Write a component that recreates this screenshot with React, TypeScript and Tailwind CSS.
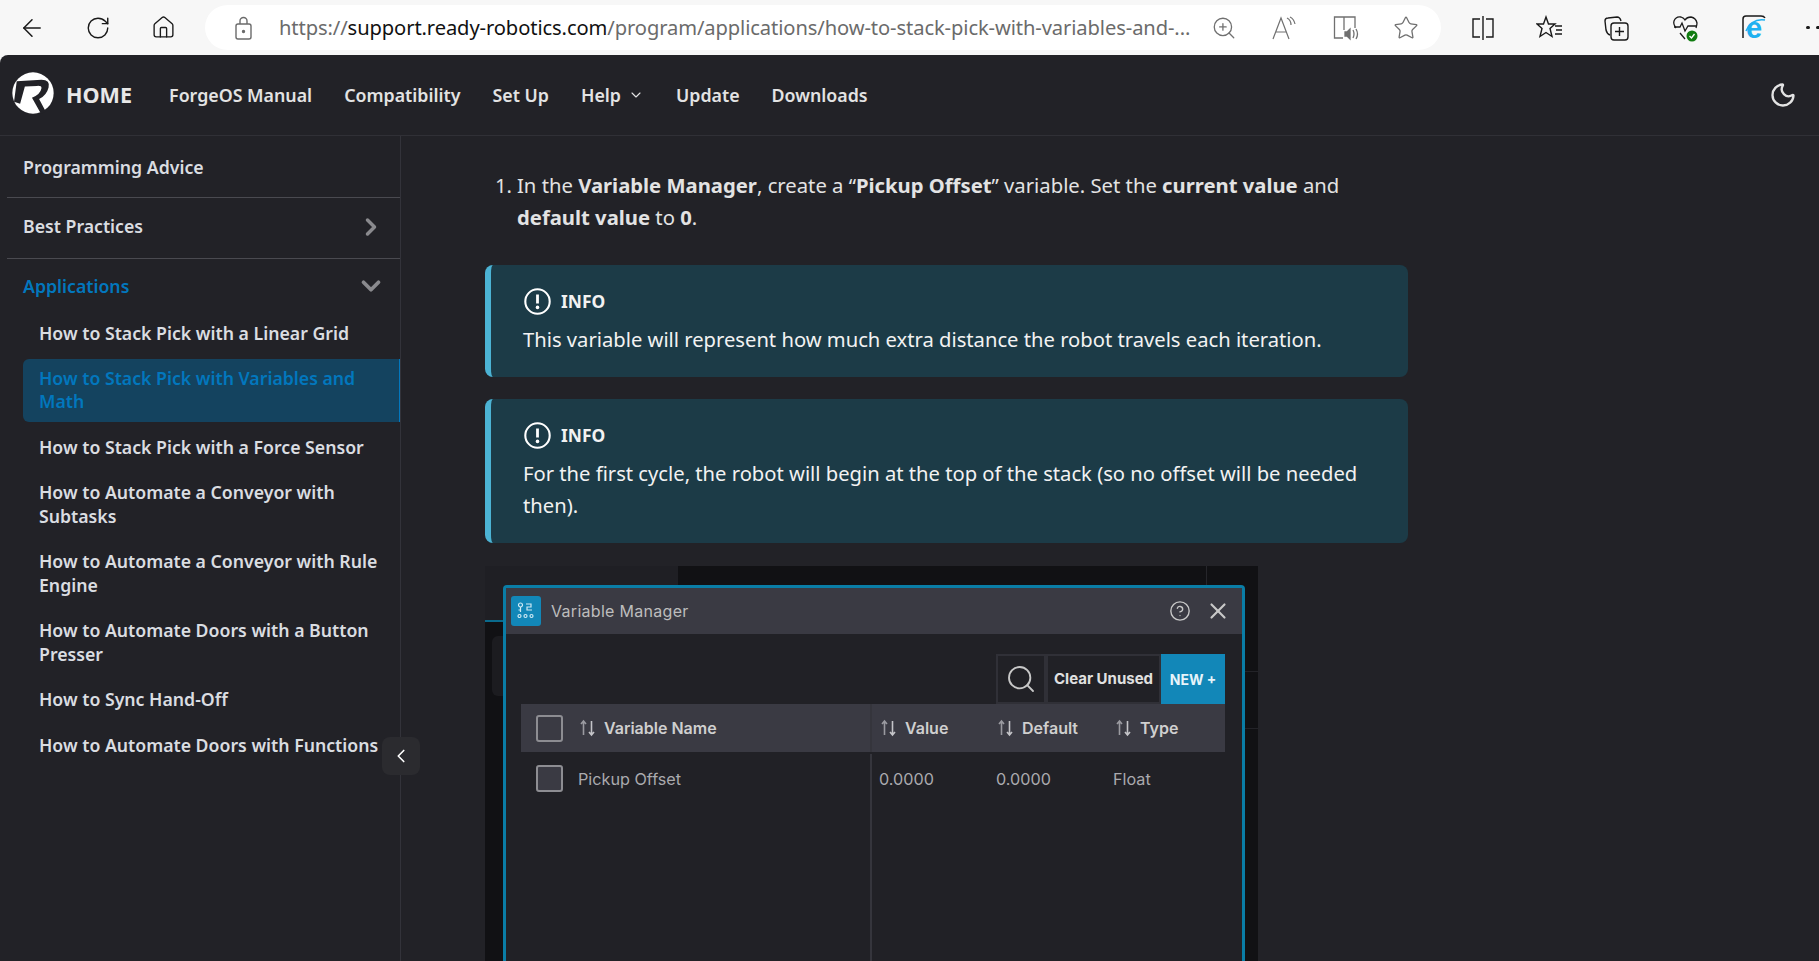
import { ChevronDown, ChevronLeft, ChevronRight, Moon, X, Search, ArrowLeft, RotateCw, Home, ZoomIn, Star, CircleHelp } from 'lucide-react'

const font = "font-['Noto_Sans','Open_Sans',sans-serif]"
const subItems = [
  'How to Automate a Conveyor with Subtasks',
  'How to Automate a Conveyor with Rule Engine',
  'How to Automate Doors with a Button Presser',
  'How to Sync Hand-Off',
  'How to Automate Doors with Functions',
]

function Logo() {
  return (
    <svg width="42" height="42" viewBox="38 38 124 124" className="-mt-[5px] shrink-0">
      <circle cx="100" cy="100" r="61" fill="#fff" />
      <path d="M52 65 L125 61 Q152 62 146 84 Q140 108 118 118 L138 155 L124 162 L97 114 Q122 104 125 86 Q126 78 112 79 L76 81 L62 132 L44 126 Z" fill="#222227" />
    </svg>
  )
}

function SortArrows() {
  return (
    <svg width="17" height="18" viewBox="0 0 17 18" fill="none" strokeWidth="1.6" className="shrink-0">
      <path d="M4.5 16V2.5M2 5l2.5-3L7 5" stroke="#9a9aa0" />
      <path d="M12.5 2v13.5M10 13l2.5 3 2.5-3" stroke="#c4c4c8" />
    </svg>
  )
}

function Checkbox() {
  return <div className="w-[27px] h-[27px] rounded-[3px] border-2 border-[#8d8d92] bg-[#3a3a43] shrink-0" />
}

function Info({ children }: { children: React.ReactNode }) {
  return (
    <div className="bg-[#1c3b47] border-l-[6px] border-[#4cb3d4] rounded-lg pl-[32px] pr-6 pt-[20px] pb-[22px] text-[#f2f2f2]">
      <div className="flex items-center gap-[10px] h-[32px] font-bold text-[17.4px]">
        <svg width="27" height="27" viewBox="0 0 27 27" fill="none" stroke="#fff" strokeWidth="2.1" className="ml-[1px]">
          <circle cx="13.5" cy="13.5" r="12.2" />
          <path d="M13.5 6.5v9" strokeWidth="2.8" />
          <circle cx="13.5" cy="19.4" r="1.8" fill="#fff" stroke="none" />
        </svg>
        INFO
      </div>
      <div className="text-[20.2px] leading-[32px] mt-[6px]">{children}</div>
    </div>
  )
}

function BrowserBar() {
  return (
    <div className="h-[55px] bg-[#f7f7f7] flex items-center text-[#1a1a1a] overflow-hidden">
      <div className="w-[205px] flex items-center pl-[18px] gap-[39px] shrink-0">
        <ArrowLeft size={28} strokeWidth={1.3} />
        <RotateCw size={26} strokeWidth={1.3} />
        <Home size={25} strokeWidth={1.3} className="ml-[1px]" />
      </div>
      <div className="w-[1236px] h-[45px] bg-white rounded-full flex items-center pl-[29px] text-[#6b6b6b] shrink-0">
        <svg width="20" height="26" viewBox="0 0 20 26" fill="none" stroke="#6b6b6b" strokeWidth="1.4" className="shrink-0">
          <rect x="2" y="9" width="15" height="15" rx="2" />
          <path d="M6 9V6a3.5 3.5 0 0 1 7 0v3" />
          <circle cx="9.5" cy="16.5" r="1" fill="#6b6b6b" />
        </svg>
        <div className="ml-[25px] text-[20.15px] whitespace-nowrap tracking-[-0.1px] w-[920px]">
          https://<span className="text-[#111]">support.ready-robotics.com</span>/program/applications/how-to-stack-pick-with-variables-and-...
        </div>
        <div className="flex items-center gap-[34px] ml-[12px] text-[#707070]">
          <ZoomIn size={26} strokeWidth={1.2} />
          <svg width="26" height="26" viewBox="0 0 26 26" fill="none" stroke="#707070" strokeWidth="1.2">
            <path d="M2 24 L10 3 L18 24 M5 17 H15" />
            <path d="M16 3q4 2 4 7M19 2q4 2 5 7" />
          </svg>
          <svg width="26" height="26" viewBox="0 0 26 26" fill="none" stroke="#707070" strokeWidth="1.3" className="ml-[2px]">
            <path d="M11 2 H1.5 V23 H10 M11 2 V15 M11 2 H22 V13" />
            <path d="M12 17h2l3-3v10l-3-3h-2z" fill="#707070" />
            <path d="M20 15q2 4 0 8M23 14q3 5 0 10" />
          </svg>
          <Star size={26} strokeWidth={1.2} />
        </div>
      </div>
      <div className="flex items-center pl-[30px] gap-[41px] text-[#1a1a1a] shrink-0">
        <svg width="24" height="26" viewBox="0 0 24 26" fill="none" stroke="#1a1a1a" strokeWidth="1.4">
          <path d="M12 1v24M9 4H2v18h7M15 4h7v18h-7" />
        </svg>
        <svg width="27" height="26" viewBox="0 0 27 26" fill="none" stroke="#1a1a1a" strokeWidth="1.4">
          <path d="M10 2l2.5 7H19l-5 4.5 2 8-6-4-6 4 2-8L1 9h6.5z" />
          <path d="M19 11h7M20 15h6M19 19h7" />
        </svg>
        <svg width="27" height="26" viewBox="0 0 27 26" fill="none" stroke="#1a1a1a" strokeWidth="1.4">
          <path d="M6 20Q3 19 2 15L1 6q0-3 3-3l9-1q3 0 4 4" />
          <rect x="7" y="8" width="17" height="17" rx="3" />
          <path d="M15.5 12v9M11 16.5h9" />
        </svg>
        <svg width="28" height="28" viewBox="0 0 28 28" fill="none" stroke="#1a1a1a" strokeWidth="1.3">
          <path d="M4 14Q1 10 2 7q2-5 7-4 3 1 4 3 2-3 6-3 5 1 6 6 0 2-1 5" />
          <path d="M2 13h6l2-4 3 8 3-5h8" />
          <path d="M8 19l5 6" />
          <circle cx="20" cy="22" r="5.5" fill="#107c10" stroke="none" />
          <path d="M17.5 22l2 2 3-4" stroke="#fff" />
        </svg>
        <svg width="27" height="28" viewBox="0 0 27 28" fill="none" className="overflow-visible">
          <path d="M2 24V5q0-3 3-3h15q3 0 4 2" stroke="#1a1a1a" strokeWidth="1.5" />
          <path d="M5 17Q11 4 24 6" stroke="#1eb0f0" strokeWidth="1.6" />
          <text x="5" y="24" fontSize="29" fontWeight="700" fill="#1eb0f0" fontFamily="Liberation Sans, sans-serif">e</text>
        </svg>
        <div className="flex gap-[6.5px] ml-[-3px]">
          <span className="w-[3.5px] h-[3.5px] rounded-full bg-[#1a1a1a]" />
          <span className="w-[3.5px] h-[3.5px] rounded-full bg-[#1a1a1a]" />
          <span className="w-[3.5px] h-[3.5px] rounded-full bg-[#1a1a1a]" />
        </div>
      </div>
    </div>
  )
}

function Sidebar() {
  const cat = "flex items-center justify-between pl-[16px] pr-[17px] "
  return (
    <aside className="relative w-[401px] shrink-0 border-r border-[#33333a] text-[17.7px] font-semibold text-[#dadde1]">
      <div className="pl-[7px] pt-[8px]">
        <div className={cat + 'h-[54px] pb-[6px] border-b border-[#4a4a50]'}>Programming Advice</div>
        <div className={cat + 'h-[61px] pb-[3px] border-b border-[#4a4a50]'}>
          Best Practices
          <ChevronRight size={28} strokeWidth={3} className="text-[#8a8a8e] -mr-[2px]" />
        </div>
        <div className={cat + 'h-[57px] pb-[3px] text-[#0277bd]'}>
          Applications
          <ChevronDown size={30} strokeWidth={3} className="text-[#8a8a8e] -mr-[3px]" />
        </div>
      </div>
      <ul className="pl-[23px] leading-[23.5px]">
        <li className="pl-[16px] pr-[10px] py-[8px] mt-[-2px] mb-[5px]">How to Stack Pick with a Linear Grid</li>
        <li className="pl-[16px] pr-[16px] py-[8px] bg-[#14435f] text-[#0277bd] rounded-l-md border-r border-[#0277bd] mb-[6px]">
          How to Stack Pick with Variables and Math
        </li>
        <li className="pl-[16px] pr-[10px] py-[8px] mb-[6px]">How to Stack Pick with a Force Sensor</li>
        {subItems.map(t => (
          <li key={t} className="pl-[16px] pr-[10px] py-[8px] mb-[6px]">{t}</li>
        ))}
      </ul>
      <button className="absolute top-[601px] left-[382px] w-[38px] h-[38px] rounded-lg bg-[#2b2b2f] flex items-center justify-center text-white">
        <ChevronLeft size={22} strokeWidth={1.8} />
      </button>
    </aside>
  )
}

function Screenshot() {
  return (
    <div className="relative h-[420px] w-[773px] overflow-hidden bg-[#111114] mt-[23px] pl-[18px] pr-[13px] pt-[19px] font-['Inter',sans-serif]">
      {/* app behind the dialog */}
      <div className="absolute top-0 left-0 w-[193px] h-[56px] bg-[#1f1f24] border-b-2 border-[#0a6a8c]" />
      <div className="absolute top-[70px] left-[7px] w-[30px] h-[60px] bg-[#1c1c20] rounded-md" />
      <div className="absolute top-[105px] right-0 w-[13px] h-[58px] border-y border-[#232328]" />
      <div className="absolute top-0 right-[51px] w-px h-[20px] bg-[#26262b]" />
      <div className="relative h-[420px] bg-[#212126] border-[3px] border-b-0 border-[#0a7da6] rounded-t-[4px]">
        <div className="h-[46px] bg-[#3a3a43] flex items-center pl-[5px] pr-[11px] text-[#bdbdbd]">
          <div className="w-[30px] h-[30px] bg-[#1287b8] rounded-[3px] flex items-center justify-center">
            <svg width="20" height="20" viewBox="0 0 20 20" fill="none" stroke="#cfe9f4" strokeWidth="1.2">
              <circle cx="4.5" cy="4" r="2" />
              <path d="M4.5 6v5M2.5 9h2" />
              <path d="M10 3h5v3h-4v3h5" />
              <circle cx="3.5" cy="15" r="1.5" />
              <circle cx="9.5" cy="15" r="1.5" />
              <circle cx="15.5" cy="15" r="1.5" />
            </svg>
          </div>
          <span className="ml-[10px] text-[16px] tracking-[0.3px]">Variable Manager</span>
          <div className="ml-auto flex items-center gap-[14px] text-[#c8c8c8]">
            <CircleHelp size={22} strokeWidth={1.5} />
            <X size={26} strokeWidth={2} />
          </div>
        </div>
        <div className="pl-[15px] pr-[17px]">
          <div className="h-[70px] flex items-end justify-end pt-[20px]">
            <div className="w-[50px] h-[50px] border-2 border-[#303037] flex items-center justify-center text-[#c8c8c8]">
              <Search size={32} strokeWidth={1.4} />
            </div>
            <div className="h-[50px] w-[115px] border-2 border-[#303037] flex items-center justify-center text-[15px] font-bold text-[#e0e0e0] whitespace-nowrap">Clear Unused</div>
            <div className="h-[50px] w-[64px] bg-[#1287b8] flex items-center justify-center text-[14px] font-bold text-[#e6f4fa]">NEW +</div>
          </div>
          <div className="h-[48px] bg-[#3a3a43] flex items-center text-[16px] font-semibold text-[#cfcfcf]">
            <div className="w-[351px] flex items-center pl-[15px] border-r-2 border-[#35353c] h-full shrink-0">
              <Checkbox />
              <span className="ml-[16px] mr-[8px]"><SortArrows /></span>
              Variable Name
            </div>
            <div className="w-[117px] flex items-center gap-[8px] pl-[8px] shrink-0"><SortArrows />Value</div>
            <div className="w-[117px] flex items-center gap-[8px] pl-[8px] shrink-0"><SortArrows />Default</div>
            <div className="flex items-center gap-[8px] pl-[9px]"><SortArrows />Type</div>
          </div>
          <div className="flex text-[16.2px] text-[#aaaaae] h-[400px]">
            <div className="w-[351px] flex items-start pl-[15px] pt-[11px] border-r-2 border-[#35353c] shrink-0 mt-[2px]">
              <Checkbox />
              <span className="ml-[15px] pt-[2px]">Pickup Offset</span>
            </div>
            <div className="w-[117px] pl-[7px] pt-[15px] shrink-0">0.0000</div>
            <div className="w-[117px] pl-[7px] pt-[15px] shrink-0">0.0000</div>
            <div className="pl-[7px] pt-[15px]">Float</div>
          </div>
        </div>
      </div>
    </div>
  )
}

export default function App() {
  return (
    <div className={`h-[961px] w-[1819px] overflow-hidden bg-[#f7f7f7] ${font}`}>
      <BrowserBar />
      <div className="h-[906px] bg-[#222227] rounded-tl-lg overflow-hidden flex flex-col">
        <nav className="h-[81px] shrink-0 flex items-center border-b border-[#303036] pl-[12px] pr-[22px] text-[17.8px] font-semibold text-[#e3e3e3]">
          <Logo />
          <span className="ml-[12px] mr-[37px] font-bold text-[21.6px] text-[#e8e8e8]">HOME</span>
          <div className="flex items-center gap-[32px]">
            <span>ForgeOS Manual</span>
            <span>Compatibility</span>
            <span>Set Up</span>
            <span className="flex items-center gap-[7px]">Help <ChevronDown size={16} strokeWidth={1.7} /></span>
            <span>Update</span>
            <span>Downloads</span>
          </div>
          <Moon size={28} strokeWidth={2} className="ml-auto text-[#e3e3e3]" />
        </nav>
        <div className="flex flex-1 min-h-0">
          <Sidebar />
          <main className="pl-[84px] pt-[33px] w-[1008px] text-[#e3e3e3]">
            <div className="flex text-[20.25px] leading-[32px] pl-[10px] w-[860px]">
              <span className="w-[22px] shrink-0">1.</span>
              <p>In the <b>Variable Manager</b>, create a “<b>Pickup Offset</b>” variable. Set the <b>current value</b> and <b>default value</b> to <b>0</b>.</p>
            </div>
            <div className="mt-[32px] flex flex-col gap-[22px] w-[923px]">
              <Info>This variable will represent how much extra distance the robot travels each iteration.</Info>
              <Info>For the first cycle, the robot will begin at the top of the stack (so no offset will be needed then).</Info>
            </div>
            <Screenshot />
          </main>
        </div>
      </div>
    </div>
  )
}
